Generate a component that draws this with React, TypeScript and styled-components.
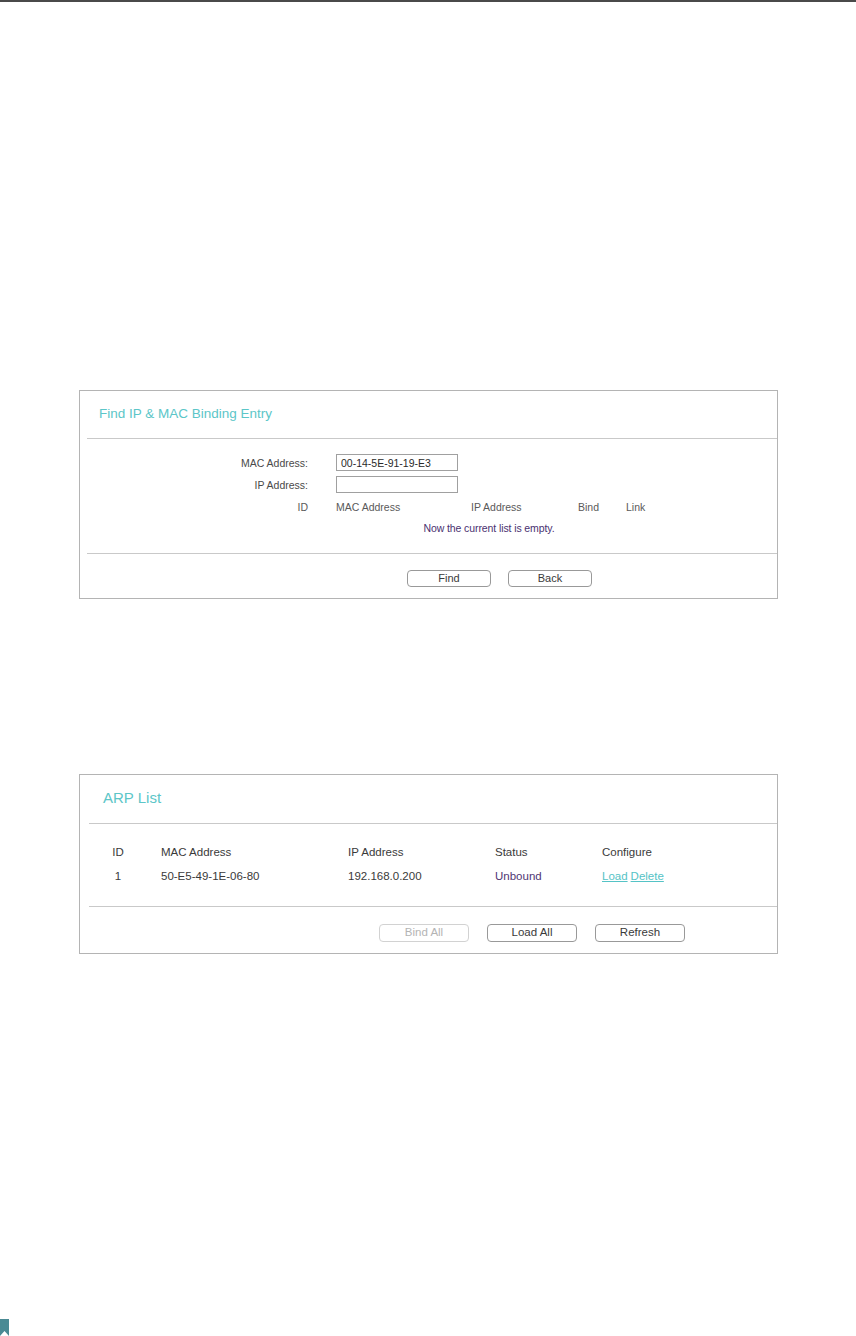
import { createGlobalStyle } from "styled-components";
import styled from "styled-components";

const GlobalStyle = createGlobalStyle`
  html, body {
    margin: 0;
    padding: 0;
    background: #fff;
  }
  body {
    font-family: "Liberation Sans", Arial, sans-serif;
    color: #3c3c3c;
  }
`;

const Page = styled.div`
  width: 856px;
  min-height: 1336px;
  display: flex;
  flex-direction: column;
  box-sizing: border-box;
`;

const TopRule = styled.div`
  height: 2px;
  background: #4a4a4a;
`;

const Panel = styled.section<{ $top: number }>`
  margin: ${({ $top }) => $top}px 0 0 79px;
  width: 699px;
  box-sizing: border-box;
  border: 1px solid #b4b4b4;
  display: flex;
  flex-direction: column;
`;

const Header = styled.div<{ $height: number; $padLeft: number }>`
  height: ${({ $height }) => $height}px;
  display: flex;
  align-items: center;
  padding: 0 0 3px ${({ $padLeft }) => $padLeft}px;
  box-sizing: border-box;
`;

const Title = styled.h2<{ $size: number }>`
  margin: 0;
  font-weight: 400;
  font-size: ${({ $size }) => $size}px;
  color: #5cc6c8;
`;

const Divider = styled.div<{ $indent: number }>`
  height: 1px;
  margin-left: ${({ $indent }) => $indent}px;
  background: #c9c9c9;
`;

const FindBody = styled.div`
  padding: 15px 0 18px;
  display: flex;
  flex-direction: column;
  font-size: 10.5px;
`;

const FieldRow = styled.div`
  display: flex;
  align-items: center;
  & + & {
    margin-top: 5px;
  }
`;

const Label = styled.label`
  width: 256px;
  padding-right: 28px;
  box-sizing: border-box;
  text-align: right;
  color: #4a4a4a;
`;

const TextInput = styled.input`
  width: 122px;
  height: 17px;
  box-sizing: border-box;
  margin: 0;
  padding: 0 4px;
  border: 1px solid #a0a0a0;
  border-radius: 0;
  font-family: "Liberation Sans", Arial, sans-serif;
  font-size: 10.5px;
  color: #2a2a2a;
  outline: none;
`;

const FindHead = styled.div`
  margin-top: 7px;
  display: grid;
  grid-template-columns: 256px 135px 107px 48px 20px;
  line-height: 14px;
  color: #5a5a5a;
`;

const HeadId = styled.span`
  padding-right: 28px;
  text-align: right;
`;

const EmptyNote = styled.div`
  margin: 7px 0 0 254px;
  width: 310px;
  line-height: 14px;
  text-align: center;
  letter-spacing: -0.1px;
  color: #4a3170;
`;

const Footer = styled.div<{ $padLeft: number; $gap: number; $top: number }>`
  display: flex;
  gap: ${({ $gap }) => $gap}px;
  padding: ${({ $top }) => $top}px 0 11px ${({ $padLeft }) => $padLeft}px;
`;

const Button = styled.button<{ $width: number; $height: number; $size: number }>`
  width: ${({ $width }) => $width}px;
  height: ${({ $height }) => $height}px;
  box-sizing: border-box;
  padding: 0;
  margin: 0;
  border: 1px solid #999;
  border-radius: 4px;
  background: #fff;
  font-family: "Liberation Sans", Arial, sans-serif;
  font-size: ${({ $size }) => $size}px;
  line-height: 1;
  color: #3a3a3a;
  &:disabled {
    border-color: #d2d2d2;
    color: #b4b4b4;
  }
`;

const ArpTable = styled.div`
  padding: 16px 0 18px 31px;
  display: grid;
  grid-template-columns: 50px 187px 147px 107px 1fr;
  grid-auto-rows: 24px;
  align-items: center;
  font-size: 11.5px;
  color: #3a3a3a;
`;

const IdCell = styled.span`
  width: 14px;
  text-align: center;
`;

const StatusCell = styled.span`
  color: #4f3673;
`;

const ConfigCell = styled.span`
  display: flex;
  gap: 3px;
`;

const ActionLink = styled.a`
  color: #55c3c6;
  text-decoration: underline;
  cursor: pointer;
`;

const Bookmark = styled.svg`
  display: block;
  margin-top: auto;
`;

const arpRows = [
  { id: 1, mac: "50-E5-49-1E-06-80", ip: "192.168.0.200", status: "Unbound" },
];

export default function App() {
  return (
    <>
      <GlobalStyle />
      <Page>
        <TopRule />

        <Panel $top={388}>
          <Header $height={47} $padLeft={19}>
            <Title $size={13.5}>Find IP &amp; MAC Binding Entry</Title>
          </Header>
          <Divider $indent={7} />
          <FindBody>
            <FieldRow>
              <Label>MAC Address:</Label>
              <TextInput defaultValue="00-14-5E-91-19-E3" />
            </FieldRow>
            <FieldRow>
              <Label>IP Address:</Label>
              <TextInput defaultValue="" />
            </FieldRow>
            <FindHead>
              <HeadId>ID</HeadId>
              <span>MAC Address</span>
              <span>IP Address</span>
              <span>Bind</span>
              <span>Link</span>
            </FindHead>
            <EmptyNote>Now the current list is empty.</EmptyNote>
          </FindBody>
          <Divider $indent={7} />
          <Footer $padLeft={327} $gap={17} $top={16}>
            <Button $width={84} $height={17} $size={11}>Find</Button>
            <Button $width={84} $height={17} $size={11}>Back</Button>
          </Footer>
        </Panel>

        <Panel $top={175}>
          <Header $height={48} $padLeft={23}>
            <Title $size={15}>ARP List</Title>
          </Header>
          <Divider $indent={9} />
          <ArpTable>
            <IdCell>ID</IdCell>
            <span>MAC Address</span>
            <span>IP Address</span>
            <span>Status</span>
            <span>Configure</span>
            {arpRows.map((row) => (
              <>
                <IdCell key={`id-${row.id}`}>{row.id}</IdCell>
                <span>{row.mac}</span>
                <span>{row.ip}</span>
                <StatusCell>{row.status}</StatusCell>
                <ConfigCell>
                  <ActionLink>Load</ActionLink>
                  <ActionLink>Delete</ActionLink>
                </ConfigCell>
              </>
            ))}
          </ArpTable>
          <Divider $indent={9} />
          <Footer $padLeft={299} $gap={18} $top={17}>
            <Button $width={90} $height={18} $size={11.5} disabled>
              Bind All
            </Button>
            <Button $width={90} $height={18} $size={11.5}>Load All</Button>
            <Button $width={90} $height={18} $size={11.5}>Refresh</Button>
          </Footer>
        </Panel>

        <Bookmark width="9" height="17" viewBox="0 0 9 17">
          <polygon points="0,0 9,0 9,17 4.5,12 0,17" fill="#4a8a94" />
        </Bookmark>
      </Page>
    </>
  );
}
